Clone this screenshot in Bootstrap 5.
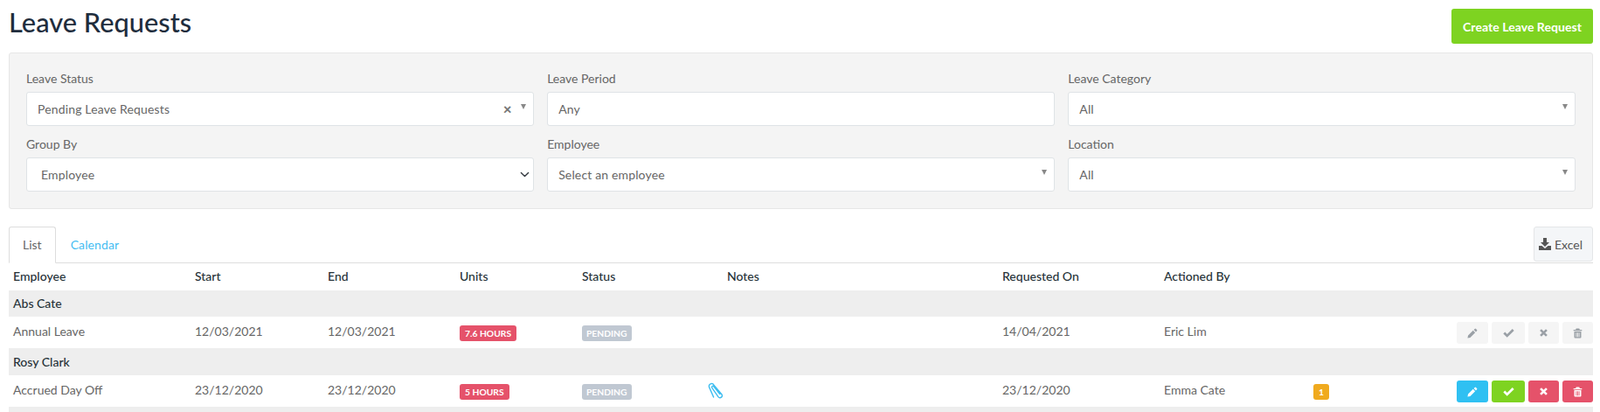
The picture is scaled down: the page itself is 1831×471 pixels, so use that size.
<!DOCTYPE html>
<html lang="en">
<head>
<meta charset="utf-8">
<title>Leave Requests</title>
<link href="https://cdn.jsdelivr.net/npm/bootstrap@5.3.0/dist/css/bootstrap.min.css" rel="stylesheet">
<style>
html,body{height:471px;overflow:hidden}
body{font-family:"Lato","Liberation Sans",sans-serif;font-size:14px;color:#666;background:#fff;padding:10px 8px 0 10px}
.pg-title{font-size:30.8px;font-weight:500;color:#1f2d3d;margin:0;line-height:32px}
.btn-create{background:#7ed321;color:#fff;font-weight:700;font-size:14px;height:40px;width:162px;border:0;border-radius:3px;padding:0;letter-spacing:.05px}
.filter-panel{margin-top:10px;background:#f4f4f4;border:1px solid #e6e6e6;border-radius:3px;padding:19px 19px 19px}
.filter-row{--bs-gutter-x:15.5px;--bs-gutter-y:11px}
.filter-label{display:block;font-size:14px;line-height:20px;margin-bottom:5px;color:#666}
.filter-ctl{height:39px;border:1px solid #dfe3e6;border-radius:3px;background-color:#fff;color:#666;font-size:14px;padding:0 8px 0 12px;box-shadow:none;letter-spacing:.15px}
select.filter-ctl{padding-left:16px;background-size:13px 11px;background-position:right 3px center}
.sel-x{font-size:17px;font-weight:900;color:#777;line-height:1;margin-right:10px}
.sel-arrow{width:0;height:0;border-left:3px solid transparent;border-right:3px solid transparent;border-top:6px solid #888;margin-bottom:6px}
.tabs-bar{margin-top:20px;border-bottom:1px solid #ddd;height:42px;--bs-nav-tabs-border-color:#ddd}
.tabs-bar .nav-link{height:42px;padding:0 15px;line-height:40px;font-size:14px;color:#45bdf2;border-radius:3px 3px 0 0}
.tabs-bar .nav-item + .nav-item .nav-link{padding:0 16px;letter-spacing:.1px}
.tabs-bar .nav-link.active{color:#666;border-color:#ddd #ddd #fff}
.btn-excel{height:40px;width:68px;padding:0 0 0 5px;margin-top:0;background:#f4f6f8;border:1px solid #e4e6e8;border-radius:3px;color:#555;font-size:14px}
.leave-table{table-layout:fixed;width:100%;margin:0;--bs-table-color:#666;--bs-table-border-color:transparent}
.leave-table th,.leave-table td{border:0;vertical-align:middle;line-height:20px;font-size:14px}
.leave-table th{padding:5px 5px 6px;color:#263238;font-weight:500;height:31px}
.leave-table .grp td{padding:5px;background:#eee;color:#263238;font-weight:500;height:30px;vertical-align:bottom}
.leave-table .grp-tall td{height:31px}
.leave-table .item td{padding:4px 5px 7px;height:36px;color:#666}
.leave-table .item td.acts{padding:6px 0 5px 5px}
.c1{width:208px}.c2{width:152px}.c3{width:151px}.c4{width:140px}.c5{width:166px}.c6{width:315px}.c7{width:185px}.c8{width:171px}
.tag{display:inline-block;height:18px;line-height:18px;padding:0 6px;border-radius:3px;color:#fff;font-size:10.3px;font-weight:700;vertical-align:middle;position:relative;top:1px}
.tag-red{background:#e5526a}.tag-grey{background:#c0c8d2;padding:0 5px}.tag-orange{background:#f0aa1e}
.tag-one{width:18px;padding:0;text-align:center;top:0}
.clip{margin-left:-22px;display:block;margin-top:1px}
.act-row{gap:4px}
.act{height:25px;padding:0;border:0;border-radius:3px;display:flex;align-items:center;justify-content:center;color:#fff}
.act svg{display:block}
.w36{width:36px}.w38{width:38px}.w35{width:35px}
.act-blue{background:#2fc0f2}.act-green{background:#7ed321}.act-red{background:#e5526a}
.act-off{background:#f5f5f5;color:#9aa0a6}
</style>
</head>
<body>
<svg width="0" height="0" class="d-block" aria-hidden="true">
  <symbol id="i-pen" viewBox="0 0 16 16"><path fill="currentColor" d="M11.6 1.2a1.2 1.2 0 0 1 1.7 0l1.5 1.5a1.2 1.2 0 0 1 0 1.7l-1.5 1.5-3.2-3.2zM9 3.8l3.2 3.2-7.6 7.6L.6 15.4l.8-4z"/></symbol>
  <symbol id="i-chk" viewBox="0 0 16 16"><path fill="none" stroke="currentColor" stroke-width="3.4" d="M1.6 8l4.2 4.2 8.6-8.4"/></symbol>
  <symbol id="i-x" viewBox="0 0 16 16"><path fill="none" stroke="currentColor" stroke-width="3.8" d="M3 3l10 10M13 3L3 13"/></symbol>
  <symbol id="i-bin" viewBox="0 0 16 16"><path fill="currentColor" d="M5.5 0h5l1 2H15v2H1V2h3.5zM2.2 5h11.6v9.5a1.5 1.5 0 0 1-1.5 1.5H3.7a1.5 1.5 0 0 1-1.5-1.5zM5 7v7h1.3V7zm2.4 0v7h1.2V7zm2.3 0v7H11V7z"/></symbol>
</svg>

<header class="d-flex justify-content-between align-items-start">
  <h1 class="pg-title">Leave Requests</h1>
  <button type="button" class="btn btn-create">Create Leave Request</button>
</header>

<section class="filter-panel">
  <div class="row filter-row">
    <div class="col-4">
      <label class="filter-label">Leave Status</label>
      <div class="filter-ctl d-flex align-items-center"><span>Pending Leave Requests</span><span class="sel-x ms-auto">×</span><span class="sel-arrow"></span></div>
    </div>
    <div class="col-4">
      <label class="filter-label">Leave Period</label>
      <input type="text" class="form-control filter-ctl" value="Any">
    </div>
    <div class="col-4">
      <label class="filter-label">Leave Category</label>
      <div class="filter-ctl d-flex align-items-center"><span>All</span><span class="sel-arrow ms-auto"></span></div>
    </div>
    <div class="col-4">
      <label class="filter-label">Group By</label>
      <select class="form-select filter-ctl"><option>Employee</option></select>
    </div>
    <div class="col-4">
      <label class="filter-label">Employee</label>
      <div class="filter-ctl d-flex align-items-center"><span>Select an employee</span><span class="sel-arrow ms-auto"></span></div>
    </div>
    <div class="col-4">
      <label class="filter-label">Location</label>
      <div class="filter-ctl d-flex align-items-center"><span>All</span><span class="sel-arrow ms-auto"></span></div>
    </div>
  </div>
</section>

<ul class="nav nav-tabs tabs-bar">
  <li class="nav-item"><a class="nav-link active" href="#">List</a></li>
  <li class="nav-item"><a class="nav-link" href="#">Calendar</a></li>
  <li class="nav-item ms-auto">
    <button type="button" class="btn btn-excel d-flex align-items-center gap-1">
      <svg width="14" height="14" viewBox="0 0 14 14" aria-hidden="true"><path fill="currentColor" d="M5 0h4v5h3L7 10 2 5h3zM0 9h3.5L7 12l3.5-3H14v5H0z"/></svg>Excel
    </button>
  </li>
</ul>

<table class="table leave-table">
  <colgroup><col class="c1"><col class="c2"><col class="c3"><col class="c4"><col class="c5"><col class="c6"><col class="c7"><col class="c8"><col></colgroup>
  <thead>
    <tr><th>Employee</th><th>Start</th><th>End</th><th>Units</th><th>Status</th><th>Notes</th><th>Requested On</th><th>Actioned By</th><th></th></tr>
  </thead>
  <tbody>
    <tr class="grp"><td colspan="9">Abs Cate</td></tr>
    <tr class="item">
      <td>Annual Leave</td><td>12/03/2021</td><td>12/03/2021</td>
      <td><span class="tag tag-red">7.6 HOURS</span></td>
      <td><span class="tag tag-grey">PENDING</span></td>
      <td></td><td>14/04/2021</td><td>Eric Lim</td>
      <td class="acts"><div class="d-flex act-row justify-content-end">
        <button class="act act-off w36" type="button" aria-label="Edit"><svg width="12" height="12"><use href="#i-pen"/></svg></button>
        <button class="act act-off w38" type="button" aria-label="Approve"><svg width="13" height="13"><use href="#i-chk"/></svg></button>
        <button class="act act-off w35" type="button" aria-label="Reject"><svg width="11" height="11"><use href="#i-x"/></svg></button>
        <button class="act act-off w35" type="button" aria-label="Delete"><svg width="11" height="12"><use href="#i-bin"/></svg></button>
      </div></td>
    </tr>
    <tr class="grp grp-tall"><td colspan="9">Rosy Clark</td></tr>
    <tr class="item">
      <td>Accrued Day Off</td><td>23/12/2020</td><td>23/12/2020</td>
      <td><span class="tag tag-red">5 HOURS</span></td>
      <td><span class="tag tag-grey">PENDING</span></td>
      <td><svg class="clip" width="18" height="19" viewBox="0 0 18 19" aria-hidden="true"><g fill="none" stroke="#3dbdf0" stroke-width="1.4" stroke-linecap="round" stroke-linejoin="round"><path d="M6.6 16.6 1.6 5.2A2.9 2.9 0 0 1 3.2 1.4a2.9 2.9 0 0 1 3.7 1.4l8.9 10.6a2.4 2.4 0 0 1-.3 3.3 2.4 2.4 0 0 1-3.4-.2L4.8 6a1.3 1.3 0 0 1 .2-1.7 1.3 1.3 0 0 1 1.8.2l7 8.6" transform="translate(0 .4)"/></g></svg></td>
      <td>23/12/2020</td><td>Emma Cate</td>
      <td class="acts"><div class="d-flex align-items-center">
        <span class="tag tag-orange tag-one">1</span>
        <div class="d-flex act-row ms-auto">
        <button class="act act-blue w36" type="button" aria-label="Edit"><svg width="12" height="12"><use href="#i-pen"/></svg></button>
        <button class="act act-green w38" type="button" aria-label="Approve"><svg width="13" height="13"><use href="#i-chk"/></svg></button>
        <button class="act act-red w35" type="button" aria-label="Reject"><svg width="11" height="11"><use href="#i-x"/></svg></button>
        <button class="act act-red w35" type="button" aria-label="Delete"><svg width="11" height="12"><use href="#i-bin"/></svg></button>
        </div>
      </div></td>
    </tr>
    <tr class="grp"><td colspan="9">&nbsp;</td></tr>
  </tbody>
</table>
<script src="https://cdn.jsdelivr.net/npm/bootstrap@5.3.0/dist/js/bootstrap.bundle.min.js"></script>
</body>
</html>
